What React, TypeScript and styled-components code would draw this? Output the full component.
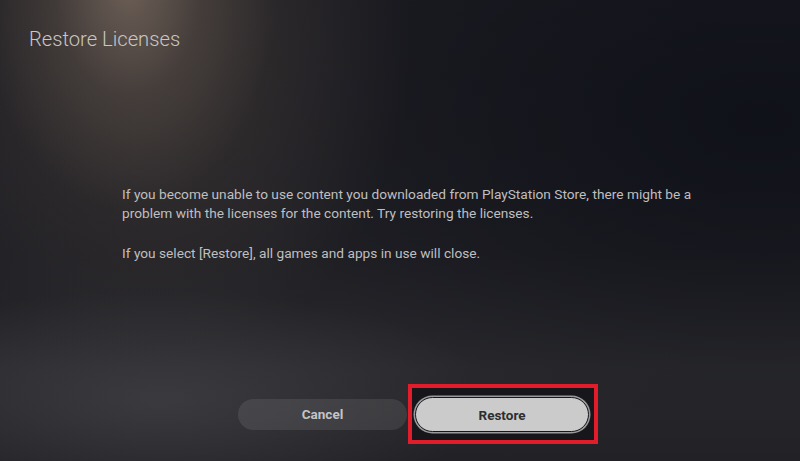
import React from "react";
import styled, { createGlobalStyle } from "styled-components";

const GlobalStyle = createGlobalStyle`
  html, body {
    margin: 0;
    padding: 0;
    background: #16161b;
  }
  * {
    box-sizing: border-box;
  }
`;

const Screen = styled.div`
  position: relative;
  width: 800px;
  height: 461px;
  overflow: hidden;
  display: flex;
  flex-direction: column;
  font-family: Roboto, "Open Sans", sans-serif;
  background:
    radial-gradient(ellipse 150px 230px at 128px -20px, rgba(128, 112, 100, 0.75), rgba(98, 86, 78, 0.35) 50%, rgba(60, 54, 52, 0) 100%),
    radial-gradient(ellipse 260px 330px at 150px 40px, rgba(70, 62, 58, 0.7), rgba(50, 46, 46, 0) 100%),
    radial-gradient(ellipse 330px 110px at 160px 400px, rgba(66, 66, 72, 0.7), rgba(50, 50, 55, 0) 100%),
    radial-gradient(ellipse 520px 300px at 760px 120px, rgba(14, 16, 24, 0.9), rgba(14, 16, 24, 0) 100%),
    linear-gradient(180deg, #1b1b21 0%, #1f1f24 55%, #28282c 80%, #222226 100%);
`;

const Title = styled.h1`
  margin: 0;
  padding: 25px 0 0 29px;
  font-size: 20.2px;
  font-weight: 300;
  line-height: 28px;
  color: #c9c6c3;
`;

const Body = styled.div`
  margin: 132px 0 0 122px;
  width: 590px;
  display: flex;
  flex-direction: column;
  gap: 21px;
`;

const Paragraph = styled.p`
  margin: 0;
  font-size: 13.7px;
  line-height: 19px;
  color: #bfbfc0;
`;

const Actions = styled.div`
  margin-top: auto;
  margin-bottom: 17px;
  padding-left: 238px;
  display: flex;
  align-items: center;
  gap: 1px;
`;

const Button = styled.button<{ $primary?: boolean }>`
  font-family: Roboto, "Open Sans", sans-serif;
  font-size: 13.5px;
  font-weight: 700;
  border-radius: 999px;
  cursor: pointer;
  display: flex;
  align-items: center;
  justify-content: center;
  padding: 0;
  ${({ $primary }) =>
    $primary
      ? `
    width: 174px;
    height: 35px;
    color: #2e2e30;
    background: #cbcbcb;
    border: 1px solid #17171a;
    box-shadow: 0 0 0 1.5px #9a9a9c;
  `
      : `
    width: 169px;
    height: 31px;
    color: #c4c4c6;
    background: rgba(255, 255, 255, 0.09);
    border: none;
  `}
`;

const Highlight = styled.div`
  border: 4px solid #e11d2b;
  padding: 9px 5px 8px 3px;
  background: #17171b;
`;

export default function App() {
  return (
    <Screen>
      <GlobalStyle />
      <Title>Restore Licenses</Title>
      <Body>
        <Paragraph>
          If you become unable to use content you downloaded from PlayStation Store, there might be a
          problem with the licenses for the content. Try restoring the licenses.
        </Paragraph>
        <Paragraph>If you select [Restore], all games and apps in use will close.</Paragraph>
      </Body>
      <Actions>
        <Button>Cancel</Button>
        <Highlight>
          <Button $primary>Restore</Button>
        </Highlight>
      </Actions>
    </Screen>
  );
}
